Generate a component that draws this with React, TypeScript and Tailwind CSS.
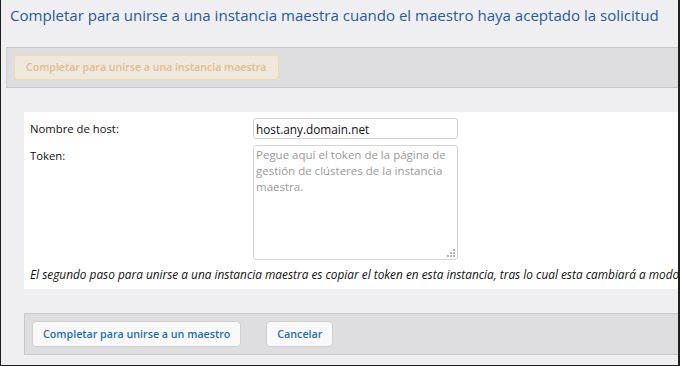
import React from "react";

const font = "font-['Open_Sans','Noto_Sans',sans-serif]";

function ToolbarButton({ children, disabled }: { children: React.ReactNode; disabled?: boolean }) {
  if (disabled) {
    return (
      <button
        disabled
        className="h-[25px] rounded-[3px] border border-[#f0dca4] bg-[#eee9dc] px-[11px] text-[10.6px] font-semibold text-[#e3bb8c]"
      >
        {children}
      </button>
    );
  }
  return (
    <button className="h-[26px] rounded-[4px] border border-[#cfcfcf] bg-[#f9f9f9] px-[10px] text-[10.7px] font-semibold text-[#1b6fc2]">
      {children}
    </button>
  );
}

export default function App() {
  return (
    <div
      className={`relative h-[366px] w-[680px] overflow-hidden border-b border-l border-r-2 border-[#1e1e1e] bg-[#efeff1] ${font}`}
    >
      {/* page title */}
      <div className="h-[47px] whitespace-nowrap pl-[9px] pt-[4px] text-[15.05px] leading-[22px] text-[#1d5ca5]">
        Completar para unirse a una instancia maestra cuando el maestro haya aceptado la solicitud
      </div>

      {/* top toolbar */}
      <div className="ml-[5px] flex h-[41px] items-center border border-r-0 border-[#c8c8c8] bg-[#dedee0] pl-[7px]">
        <ToolbarButton disabled>Completar para unirse a una instancia maestra</ToolbarButton>
      </div>

      {/* form */}
      <div className="ml-[23px] mt-[24px] h-[177px] bg-white pl-[6px] pt-[6px]">
        <div className="grid grid-cols-[223px_205px] gap-y-[6px] text-[11.3px] text-[#111]">
          <label className="leading-[21px]">Nombre de host:</label>
          <input
            defaultValue="host.any.domain.net"
            className="h-[21px] rounded-[3px] border border-[#d4d4d4] px-[2px] text-[11.8px] text-[#111] outline-none"
          />
          <label className="leading-[21px]">Token:</label>
          <div className="relative h-[115px]">
            <textarea
              placeholder={"Pegue aquí el token de la página de\ngestión de clústeres de la instancia\nmaestra."}
              className="h-full w-full resize-none rounded-[3px] border border-[#d4d4d4] px-[2px] py-[1px] text-[11.5px] leading-[16px] outline-none placeholder:text-[#9a9a9a]"
            />
            <svg className="absolute bottom-[3px] right-[3px]" width="8" height="8" viewBox="0 0 8 8">
              <rect x="6" y="0" width="2" height="2" fill="#b5b5b5" />
              <rect x="3" y="3" width="2" height="2" fill="#b5b5b5" />
              <rect x="6" y="3" width="2" height="2" fill="#b5b5b5" />
              <rect x="0" y="6" width="2" height="2" fill="#b5b5b5" />
              <rect x="3" y="6" width="2" height="2" fill="#b5b5b5" />
              <rect x="6" y="6" width="2" height="2" fill="#b5b5b5" />
            </svg>
          </div>
        </div>
        <p className="mt-[6px] whitespace-nowrap text-[11.85px] italic leading-[16px] text-[#111]">
          El segundo paso para unirse a una instancia maestra es copiar el token en esta instancia, tras lo cual esta cambiará a modo
        </p>
      </div>

      {/* bottom toolbar */}
      <div className="ml-[23px] mt-[24px] flex h-[42px] items-center gap-[25px] border border-r-0 border-[#c8c8c8] bg-[#dedee0] pl-[7px]">
        <ToolbarButton>Completar para unirse a un maestro</ToolbarButton>
        <ToolbarButton>Cancelar</ToolbarButton>
      </div>
    </div>
  );
}
